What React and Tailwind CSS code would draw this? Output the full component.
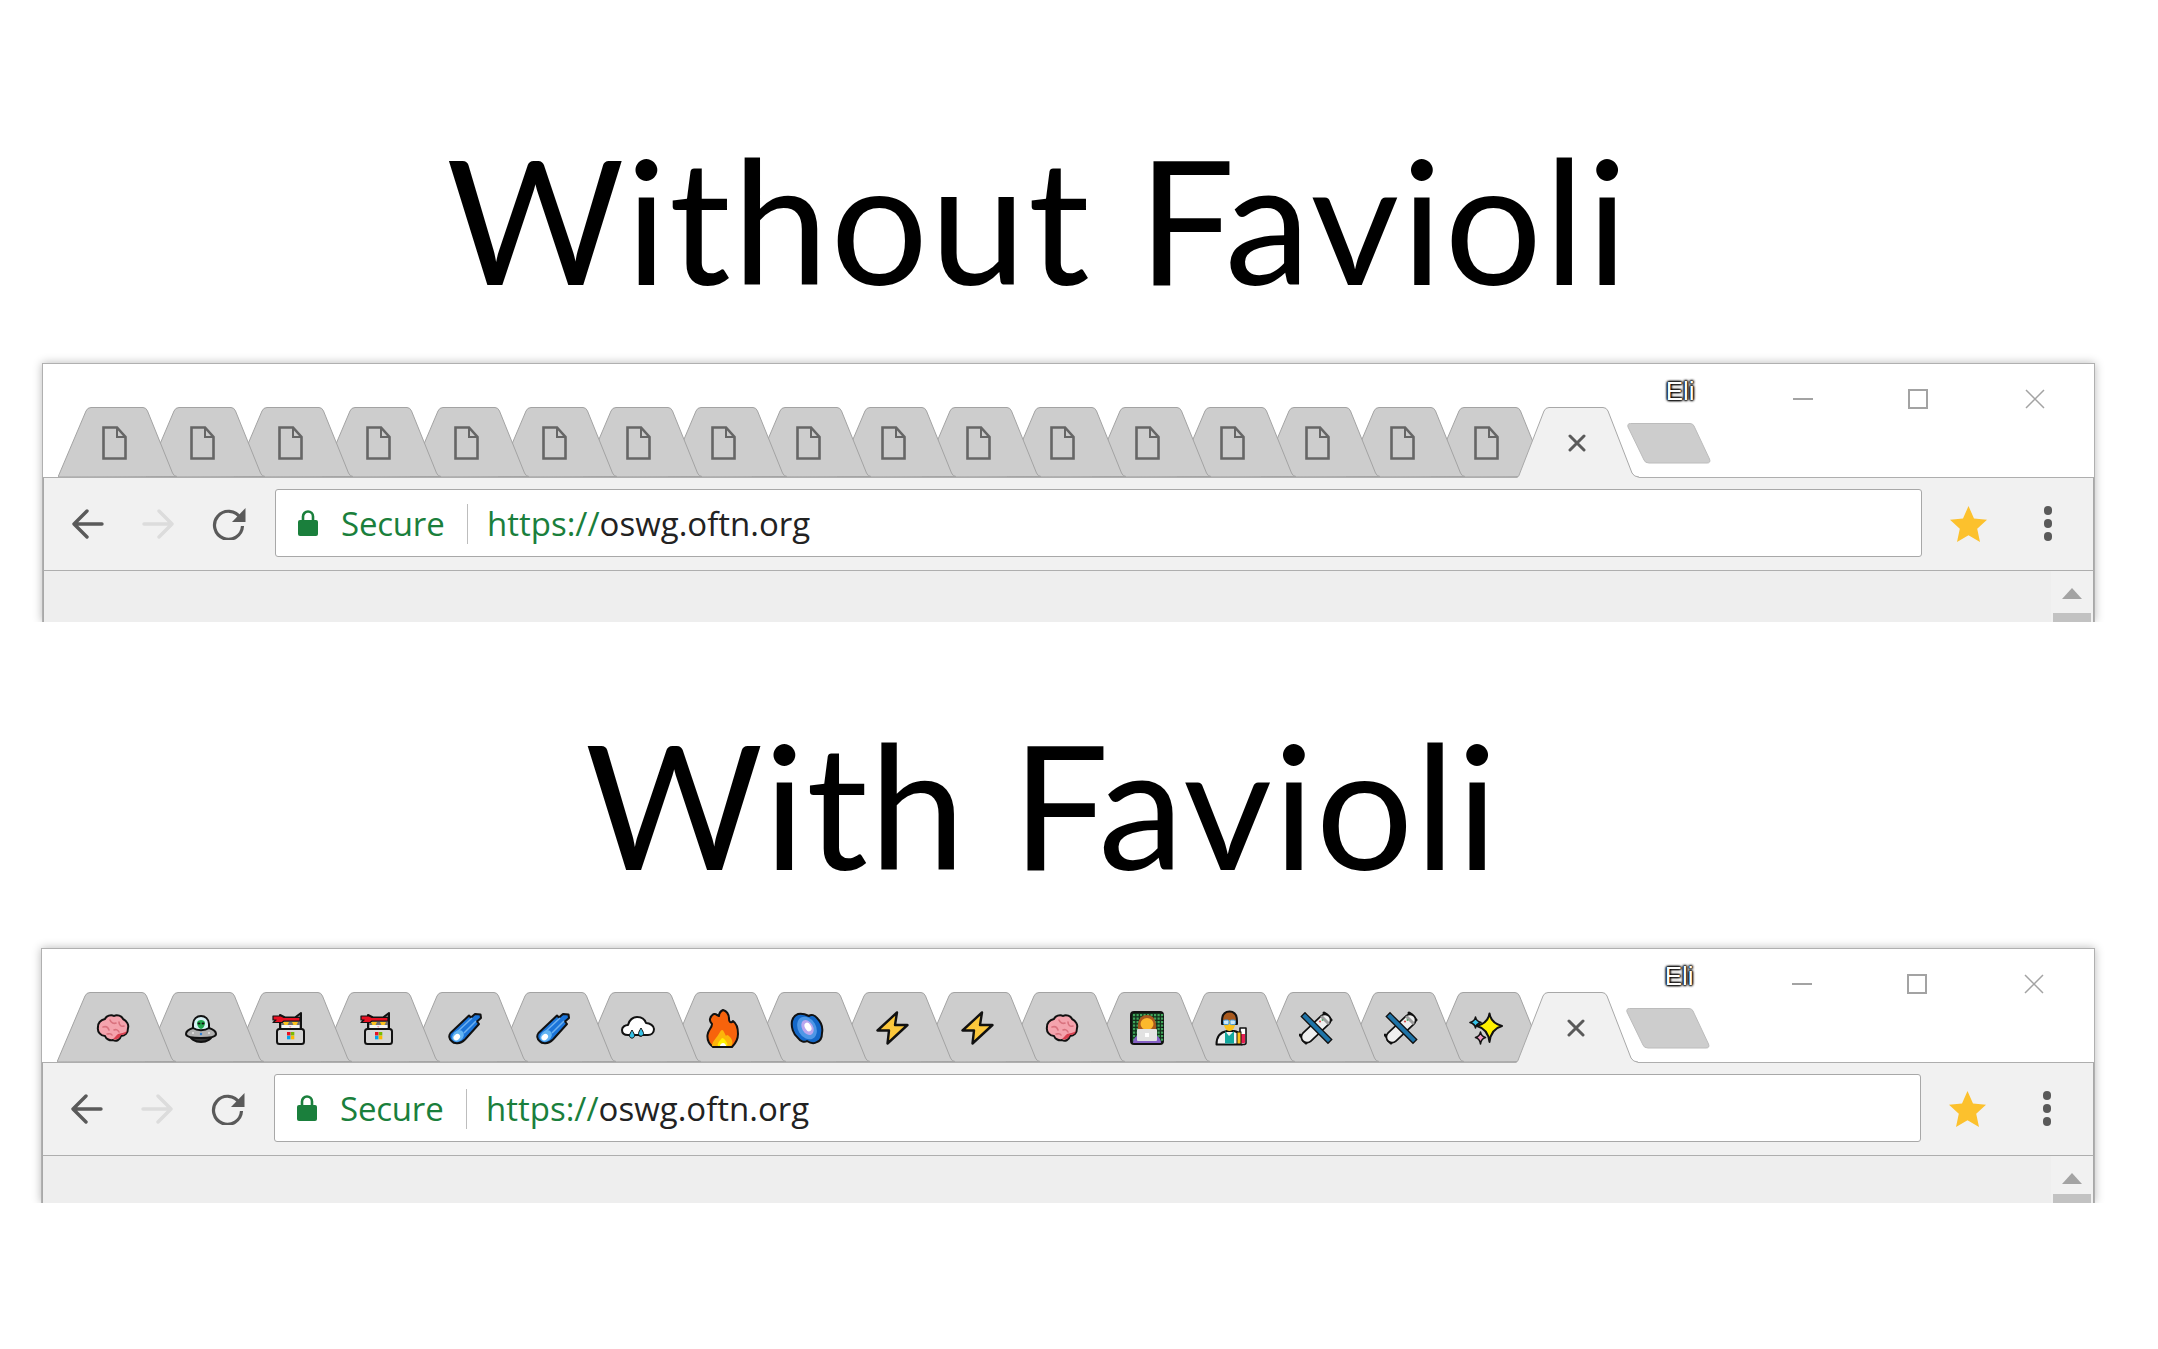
const Outline = { stroke: '#111', strokeWidth: 2, strokeLinejoin: 'round', strokeLinecap: 'round' };

function DocIcon() {
  return (
    <svg width="25" height="34" viewBox="0 0 25 34" fill="none" stroke="#666" strokeWidth="2.6">
      <path d="M1.5 1.5H15L23.5 11V32.5H1.5Z" />
      <path d="M15 1.5V11H23.5" strokeWidth="2" />
    </svg>
  );
}

function Brain() {
  return (
    <svg width="34" height="30" viewBox="0 0 34 30">
      <path {...Outline} fill="#f4a3ad" d="M9 6C10 3 15 1 18 3C21 1 26 3 27 6C31 8 33 12 32 15C32 20 29 23 25 23C24 27 20 29 17 27C14 28 10 26 9 23C5 23 1 19 2 14C2 10 5 7 9 6Z" />
      <path d="M17 26C21 27 24 25 25 22C28 22 30 21 31 18C28 20 25 20 22 21C20 23 19 24 17 26Z" fill="#d8404f" />
      <path d="M7 14C10 13 12 14 13 17M14 7C15 10 18 11 20 10M23 9C23 12 25 14 28 13M18 17C20 16 22 17 23 19M11 21C13 21 15 20 16 22" fill="none" stroke="#d9727e" strokeWidth="1.6" strokeLinecap="round" />
    </svg>
  );
}

function Ufo() {
  return (
    <svg width="34" height="29" viewBox="0 0 34 29">
      <ellipse cx="17" cy="21" rx="11" ry="7" fill="#333" {...Outline} />
      <path {...Outline} fill="#d5f1f4" d="M9 15V10C9 5 13 2 17 2C21 2 25 5 25 10V15C21 18 13 18 9 15Z" />
      <path d="M13 9C13 7 15 6 17 6C19 6 21 7 21 9C21 12 18.5 15 17 15C15.5 15 13 12 13 9Z" fill="#22a84f" />
      <ellipse cx="15" cy="9.5" rx="1.4" ry="1" fill="#111" />
      <ellipse cx="19" cy="9.5" rx="1.4" ry="1" fill="#111" />
      <path {...Outline} fill="#b0b0b0" d="M2 20C2 17 6 15 9 14C13 17 21 17 25 14C28 15 32 17 32 20C32 23 24 24 17 24C10 24 2 23 2 20Z" />
      <circle cx="17" cy="20" r="1.2" fill="#2f7fd6" />
      <circle cx="9" cy="19" r="1" fill="#e5e5e5" />
      <circle cx="25" cy="19" r="1" fill="#e5e5e5" />
    </svg>
  );
}

function NinjaCat() {
  return (
    <svg width="34" height="33" viewBox="0 0 34 33">
      <path {...Outline} fill="#6f6f6f" d="M8 18V3L13 5.5H23L29 1V18Z" />
      <path d="M9.5 13H27.5V19H9.5Z" fill="#f3f3f3" />
      <path d="M1 4H9L12 5.5H28V9H12L10 10.5H1L4 8H1Z" fill="#e81123" stroke="#111" strokeWidth="1.2" strokeLinejoin="round" />
      <path d="M11 10H17L15.5 13H12.5ZM20 10H26L24.5 13H21.5Z" fill="#fcc21b" />
      <path d="M17 14L19.5 14L18.2 16Z" fill="#f4a3ad" />
      <rect x="5" y="17" width="27" height="15" rx="2.5" fill="#d6d6d6" {...Outline} />
      <rect x="15" y="20" width="3.5" height="3.5" fill="#e81123" />
      <rect x="18.8" y="20" width="3.5" height="3.5" fill="#7cbb00" />
      <rect x="15" y="23.8" width="3.5" height="3.5" fill="#00a4ef" />
      <rect x="18.8" y="23.8" width="3.5" height="3.5" fill="#ffb900" />
    </svg>
  );
}

function Comet() {
  return (
    <svg width="34" height="33" viewBox="0 0 34 33">
      <path {...Outline} fill="#1b74d8" d="M2.5 21L21 3.5L23 5.5L27 2L32.5 2.5L33 6L29 9.5L31 12L17 27.5C12 32.5 6 32 3.5 29C1 27 .5 23.5 2.5 21Z" />
      <path d="M9 20L24 6M16 21L28 9" stroke="#6db0ef" strokeWidth="1.5" fill="none" />
      <ellipse cx="10" cy="24" rx="6.5" ry="5" fill="#62b4f2" transform="rotate(-42 10 24)" />
      <ellipse cx="8.8" cy="25.2" rx="3.6" ry="2.8" fill="#fff" transform="rotate(-42 8.8 25.2)" />
    </svg>
  );
}

function RainCloud() {
  return (
    <svg width="34" height="27" viewBox="0 0 34 27">
      <path {...Outline} fill="#fff" d="M7 20C3 20 1 18 1 15C1 12 4 10 7 10C8 5 12 2 16 2C21 2 24 5 25 8C29 8 33 11 33 14C33 18 30 20 27 20H21C20 21 19 21 18 20H13C12 22 10 22 9 20Z" />
      <path d="M11 15C12 17 13.5 19 13.5 20.5C13.5 24 8.5 24 8.5 20.5C8.5 19 10 17 11 15Z" fill="#35c3e8" stroke="#111" strokeWidth="1" />
      <path d="M20 13C21 15 22.5 17 22.5 18.5C22.5 22 17.5 22 17.5 18.5C17.5 17 19 15 20 13Z" fill="#35c3e8" stroke="#111" strokeWidth="1" />
    </svg>
  );
}

function Fire() {
  return (
    <svg width="33" height="40" viewBox="0 0 33 40">
      <path {...Outline} fill="#f7630c" d="M7 39C3 36 1 32 1.5 27C2 22 6 20 6 16C4 14 3 11 5.5 8C7 6 9 5 11 7L13 8C13 5 15 3 17 2C20 3 23 6 23 11C23 13 24 15 26 14L27 13C30 15 32 20 32 26C32 31 29 36 26 39Z" />
      <path d="M6 38C6 33 11 30 14 24C16 21 17 22 18 24L20 28C21 26 22 27 24 29C27 32 27 36 25 38Z" fill="#fcb40a" />
      <path d="M12 38C11 35 14 33 16 30C18 30 20 33 21 35C22 37 21 38 21 38Z" fill="#fff100" />
      <path d="M14 38C14 36 16 35 17 35C19 35 20 37 20 38Z" fill="#fff" />
    </svg>
  );
}

function Galaxy() {
  return (
    <svg width="34" height="33" viewBox="0 0 34 33">
      <path {...Outline} fill="#1468c8" d="M8 2C12 1 15 2 19 4C21 2 25 3 27 6C31 10 33 16 32 21C32 26 30 29 27 30C24 32 20 31 17 29C14 31 10 29 8 26C3 22 1 15 2 9C3 5 5 3 8 2Z" />
      <ellipse cx="17" cy="16" rx="9" ry="12" fill="#4e97e6" transform="rotate(-30 17 16)" />
      <ellipse cx="17.5" cy="15.5" rx="5.5" ry="8" fill="#b9a6ee" transform="rotate(-30 17.5 15.5)" />
      <ellipse cx="18" cy="15" rx="3" ry="4.6" fill="#fff" transform="rotate(-30 18 15)" />
    </svg>
  );
}

function Bolt() {
  return (
    <svg width="33" height="34" viewBox="0 0 33 34">
      <path {...Outline} strokeWidth="2.4" fill="#fcc83c" d="M21 1.5L1.5 19.5H13L11.5 32.5L31.5 14H19Z" />
    </svg>
  );
}

function Technologist() {
  const dots = [];
  for (let y = 3; y < 28; y += 3.5) {
    for (let x = 3; x < 32; x += 3.5) {
      dots.push(<rect key={`${x}-${y}`} x={x} y={y} width="2.2" height="2.2" fill="#3fa65a" />);
    }
  }
  return (
    <svg width="34" height="34" viewBox="0 0 34 34">
      <rect x="1" y="1" width="32" height="32" rx="3" fill="#12301b" {...Outline} />
      {dots}
      <path d="M8 18C7 9 11 4 17 4C23 4 27 9 26 18Z" fill="#a8591e" />
      <ellipse cx="17" cy="13" rx="6.5" ry="6" fill="#fcb92c" />
      <path d="M3 32C3 26 9 22 17 22C25 22 31 26 31 32Z" fill="#8661c5" />
      <rect x="7" y="18" width="20" height="12" rx="1" fill="#e2e2e2" />
      <rect x="15" y="22" width="4" height="4" fill="#fff" />
    </svg>
  );
}

function Scientist() {
  return (
    <svg width="34" height="36" viewBox="0 0 34 36">
      <path {...Outline} fill="#f3f3f3" d="M1.5 34.5C1.5 26 6 22 12 21H19C25 22 27 26 27 34.5Z" />
      <path d="M10 21L14 26L19 21L19 33.5H10Z" fill="#13a89e" />
      <path {...Outline} fill="#a8591e" d="M7 11C7 4 10 1.5 14.5 1.5C19 1.5 22 4 22 11V14H7Z" />
      <path d="M8.5 11C8.5 17 11 21 14.5 21C18 21 20.5 17 20.5 11C17 10 12 10 8.5 11Z" fill="#fcc21b" />
      <rect x="8.5" y="10" width="5.4" height="4.6" rx="1.4" fill="#cbe8f7" stroke="#3a96dd" strokeWidth="1" />
      <rect x="15" y="10" width="5.4" height="4.6" rx="1.4" fill="#cbe8f7" stroke="#3a96dd" strokeWidth="1" />
      <path {...Outline} strokeWidth="1.6" fill="#fff" d="M25 18H31V33C31 35 25 35 25 33Z" />
      <path d="M26 24H30V32.5C30 33.5 26 33.5 26 32.5Z" fill="#e81f52" />
      <rect x="22" y="22" width="4" height="12" fill="#fcc21b" stroke="#111" strokeWidth="1" />
    </svg>
  );
}

function Satellite() {
  return (
    <svg width="34" height="34" viewBox="0 0 34 34" fill="none">
      <path d="M26 9L8 26" stroke="#111" strokeWidth="13" strokeLinecap="round" />
      <path d="M4 29L7 32M1 24L4 27M25 2L28 4M29 6L32 9" stroke="#111" strokeWidth="3" strokeLinecap="round" />
      <path d="M26 9L8 26" stroke="#efefef" strokeWidth="9.5" strokeLinecap="round" />
      <path d="M23 6L29 12" stroke="#9e9e9e" strokeWidth="3" strokeLinecap="round" />
      <path d="M6 5.5L29 28.5" stroke="#111" strokeWidth="6.6" strokeLinecap="square" />
      <path d="M6 5.5L29 28.5" stroke="#1f74a8" strokeWidth="4" strokeLinecap="square" />
      <circle cx="21" cy="10.5" r="1.1" fill="#d9534f" />
      <circle cx="23.5" cy="9" r="1" fill="#55a868" />
    </svg>
  );
}

function Sparkles() {
  return (
    <svg width="34" height="33" viewBox="0 0 34 33">
      <path {...Outline} strokeWidth="2" fill="#fff100" d="M20.5 1.5Q22 11 33 14Q22 17 20.5 30Q19 17 8 14Q19 11 20.5 1.5Z" />
      <path {...Outline} strokeWidth="1.6" fill="#35c3e8" d="M6.5 5Q7 9 12 10.5Q7 12 6.5 16Q6 12 1 10.5Q6 9 6.5 5Z" />
      <path {...Outline} strokeWidth="1.6" fill="#ef9ac0" d="M11.5 20Q12 24 16.5 25.5Q12 27 11.5 32Q11 27 6.5 25.5Q11 24 11.5 20Z" />
    </svg>
  );
}

const plainIcons = Array.from({ length: 17 }, () => DocIcon);
const emojiIcons = [Brain, Ufo, NinjaCat, NinjaCat, Comet, Comet, RainCloud, Fire, Galaxy, Bolt, Bolt, Brain, Technologist, Scientist, Satellite, Satellite, Sparkles];

function Tab({ Icon, index }) {
  return (
    <div
      className={`relative flex h-[71px] w-[119px] shrink-0 items-center justify-center pt-[3px] pr-[7px] ${index === 0 ? '' : index < 6 ? '-ml-[31px]' : '-ml-[34.2px]'}`}
      style={{ zIndex: 30 - index }}
    >
      <svg className="absolute inset-0" width="119" height="71" viewBox="0 0 119 71">
        <path d="M0 71L28 5Q29.5 1.5 33 1.5H85Q88 1.5 89.5 5L114.5 67Q116 70.5 119 70.5Z" fill="#cdcdcd" stroke="#a3a3a3" strokeWidth="1" />
      </svg>
      <div className="relative flex">
        <Icon />
      </div>
    </div>
  );
}

function ActiveTab() {
  return (
    <div className="relative z-40 -mb-px -ml-[34.2px] flex h-[72px] w-[123px] shrink-0 items-center justify-center pt-[2px]">
      <svg className="absolute inset-0" width="123" height="72" viewBox="0 0 123 72">
        <path d="M0 72C2 72 3 70 3.5 68L28 5Q29.5 1.5 33 1.5H87Q90.5 1.5 92 5L116 67Q118 71 123 71.5V72Z" fill="#f1f1f1" />
        <path d="M0 71C2 71 3 70 3.5 68L28 5Q29.5 1.5 33 1.5H87Q90.5 1.5 92 5L116 67Q118 71 123 71" fill="none" stroke="#a8a8a8" strokeWidth="1" />
      </svg>
      <svg className="relative" width="18" height="18" viewBox="0 0 18 18" stroke="#5a5a5a" strokeWidth="3" strokeLinecap="round">
        <path d="M2 2L16 16M16 2L2 16" />
      </svg>
    </div>
  );
}

function NewTab() {
  return (
    <svg className="mb-[13px] -ml-[12px] shrink-0" width="84" height="41" viewBox="0 0 84 41">
      <path d="M3.5 .5H63Q66 .5 67 3L82.5 36Q84 40 80 40H22Q18 40 17 37L1 4Q0 .5 3.5 .5Z" fill="#cdcdcd" stroke="#bcbcbc" strokeWidth="1" />
    </svg>
  );
}

function WindowControls() {
  return (
    <div className="ml-[98px] flex items-center self-start pt-[25px]">
      <div className="h-[2px] w-[20px] bg-[#a3a3a3]" />
      <div className="ml-[95px] h-[20px] w-[20px] border-2 border-[#a3a3a3]" />
      <svg className="ml-[97px]" width="20" height="20" viewBox="0 0 20 20" stroke="#a3a3a3" strokeWidth="1.5">
        <path d="M1 1L19 19M19 1L1 19" />
      </svg>
    </div>
  );
}

function Toolbar() {
  return (
    <div className="flex h-[94px] shrink-0 items-center border-x border-y border-x-[#a8a8a8] border-y-[#aeaeae] bg-[#f1f1f1] pb-[1px]">
      <svg className="ml-[28px] shrink-0" width="32" height="32" viewBox="0 0 32 32" fill="none" stroke="#5a5a5a" strokeWidth="3.4" strokeLinecap="round" strokeLinejoin="round">
        <path d="M30 16H3M15 3L2 16L15 29" />
      </svg>
      <svg className="ml-[38px] shrink-0" width="32" height="32" viewBox="0 0 32 32" fill="none" stroke="#dcdcdc" strokeWidth="3.4" strokeLinecap="round" strokeLinejoin="round">
        <path d="M2 16H29M17 3L30 16L17 29" />
      </svg>
      <svg className="ml-[38px] shrink-0" width="34" height="33" viewBox="0 0 34 33" fill="none">
        <path d="M28.5 11A14 14 0 1 0 30.5 19" stroke="#5a5a5a" strokeWidth="3.2" />
        <path d="M33.5 1V15H20Z" fill="#5a5a5a" />
      </svg>
      <div className="mb-[2px] ml-[29px] flex h-[68px] w-[1647px] shrink-0 items-center rounded-[3px] border-[1.5px] border-[#a8a8a8] bg-white pt-[2px] font-['Open_Sans',sans-serif] text-[33px]">
        <svg className="mb-[2px] ml-[22px] shrink-0" width="20" height="27" viewBox="0 0 20 27">
          <path d="M5 12V7.5A5 5 0 0 1 15 7.5V12" fill="none" stroke="#1a7f3c" strokeWidth="2.6" />
          <rect y="11" width="20" height="16" rx="2" fill="#1a7f3c" />
        </svg>
        <span className="ml-[23px] tracking-[-0.2px] text-[#1a7f3c]">Secure</span>
        <div className="ml-[22px] h-[40px] w-[1.5px] bg-[#bdbdbd]" />
        <span className="ml-[19px] text-[#1a7f3c]">https://</span>
        <span className="text-[#222]">oswg.oftn.org</span>
      </div>
      <svg className="ml-[28px] shrink-0" width="37" height="36" viewBox="0 0 37 36">
        <path d="M18.5 0L24 12.5L37 13.8L27.2 22.8L30 36L18.5 29.2L7 36L9.8 22.8L0 13.8L13 12.5Z" fill="#fcc12d" />
      </svg>
      <div className="ml-[57px] flex flex-col gap-[4px]">
        <div className="h-[9px] w-[8px] rounded-full bg-[#5a5a5a]" />
        <div className="h-[9px] w-[8px] rounded-full bg-[#5a5a5a]" />
        <div className="h-[9px] w-[8px] rounded-full bg-[#5a5a5a]" />
      </div>
    </div>
  );
}

function Browser({ icons, className }) {
  return (
    <div className={`flex flex-col border border-b-0 border-[#b0b0b0] bg-white shadow-[0_0_9px_rgba(0,0,0,0.28)] [clip-path:inset(-14px_-14px_0_-14px)] ${className}`}>
      <div className="flex h-[113px] shrink-0 items-end pl-[15px]">
        {icons.map((Icon, i) => (
          <Tab key={i} Icon={Icon} index={i} />
        ))}
        <ActiveTab />
        <NewTab />
        <div className="ml-[-45px] self-start pt-[12px] font-['Liberation_Sans',sans-serif] text-[26px] leading-[30px] text-white [text-shadow:0_0_1px_#000,0_0_2px_#000,0_0_2px_#000,0_0_3px_#000,0_0_3px_#000,0_0_3px_#000]">
          Eli
        </div>
        <WindowControls />
      </div>
      <Toolbar />
      <div className="flex min-h-0 flex-1 border-x border-x-[#a8a8a8] bg-[#eeeeee]">
        <div className="ml-auto flex w-[42px] flex-col items-center bg-[#f1f1f1] pt-[17px]">
          <svg width="20" height="11" viewBox="0 0 20 11">
            <path d="M10 0L20 11H0Z" fill="#a3a3a3" />
          </svg>
          <div className="mt-auto h-[9px] w-[38px] bg-[#c2c2c2]" />
        </div>
      </div>
    </div>
  );
}

export default function App() {
  return (
    <div className="h-[1349px] w-[2158px] overflow-hidden bg-white font-['Lato',sans-serif] text-black">
      <h1 className="flex h-[363px] items-end justify-center pr-[82px] pb-[44px] text-[172px] leading-[200px] font-normal tracking-[2px]">Without Favioli</h1>
      <Browser icons={plainIcons} className="ml-[42px] h-[259px] w-[2053px]" />
      <h1 className="flex h-[326px] items-end justify-center pr-[74px] pb-[44px] text-[172px] leading-[200px] font-normal tracking-[1.3px]">With Favioli</h1>
      <Browser icons={emojiIcons} className="ml-[41px] h-[255px] w-[2054px]" />
    </div>
  );
}
